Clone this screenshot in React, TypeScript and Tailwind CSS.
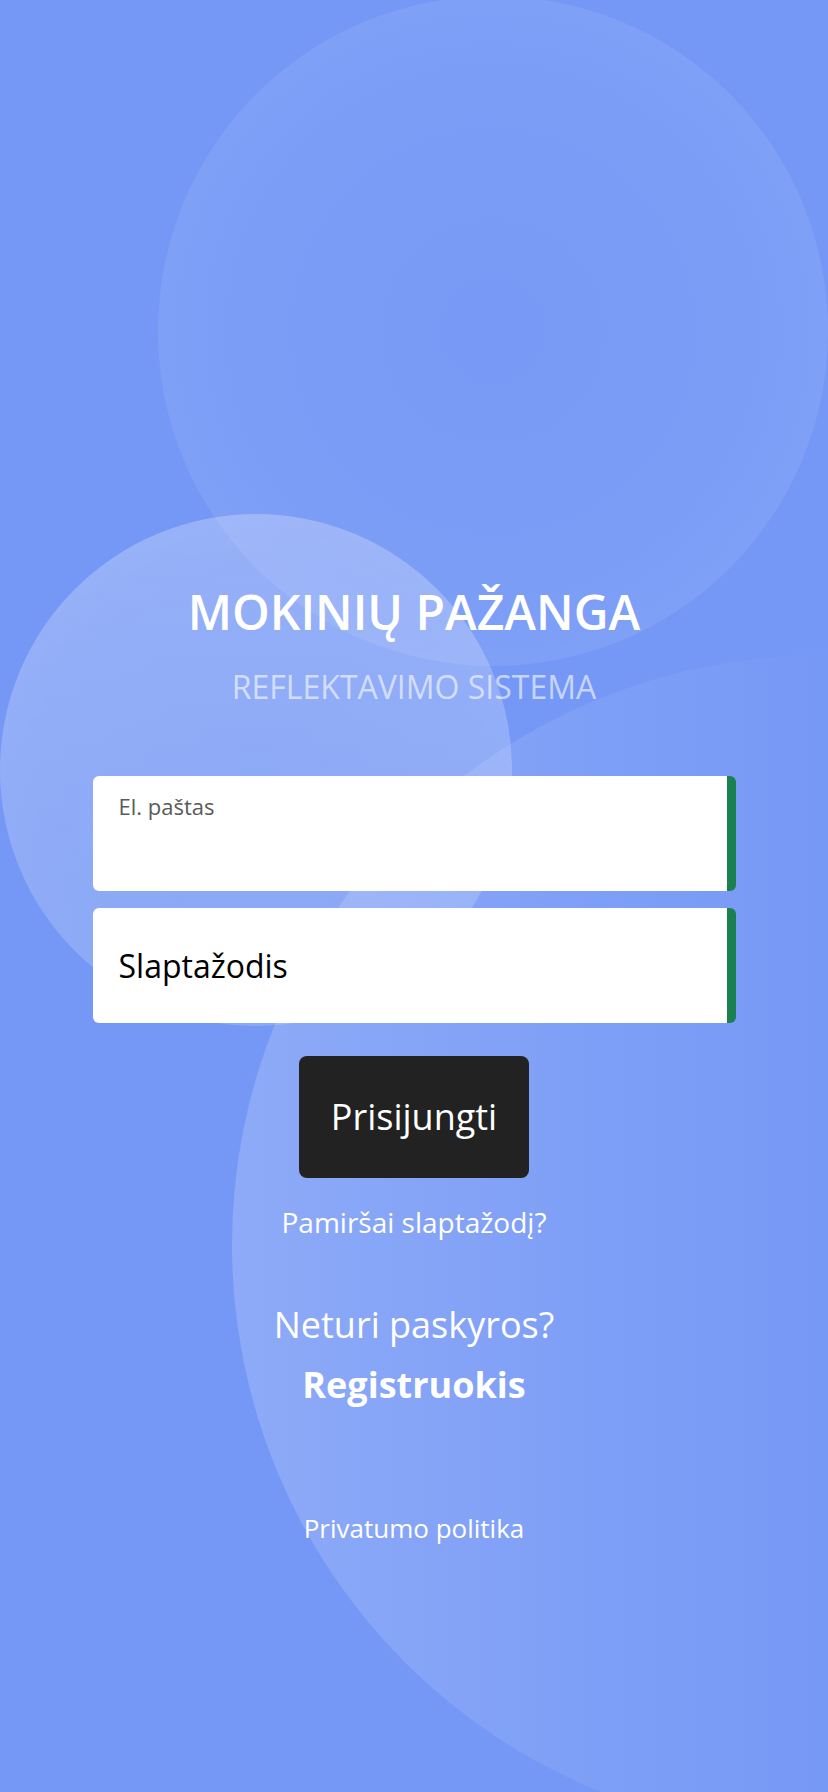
export default function App() {
  return (
    <div className="relative min-h-screen h-[1792px] w-full overflow-hidden bg-[#7598f6] font-['Open_Sans',sans-serif]">
      {/* decorative bubbles */}
      <div className="absolute left-[158px] top-[-4px] h-[670px] w-[670px] rounded-full bg-[radial-gradient(circle,rgba(255,255,255,0.02)_0%,rgba(255,255,255,0.05)_55%,rgba(255,255,255,0.13)_100%)]" />
      <div className="absolute left-[0px] top-[514px] h-[512px] w-[512px] rounded-full bg-[linear-gradient(180deg,rgba(255,255,255,0.14)_0%,rgba(255,255,255,0.04)_100%),radial-gradient(circle,rgba(255,255,255,0.1)_0%,rgba(255,255,255,0.12)_60%,rgba(255,255,255,0.18)_100%)]" />
      <div className="absolute left-[232px] top-[655px] h-[1180px] w-[1180px] rounded-full bg-[linear-gradient(90deg,rgba(255,255,255,0.18)_0%,rgba(255,255,255,0.07)_30%,rgba(255,255,255,0)_55%)]" />

      <div className="relative mx-auto flex w-[643px] flex-col items-center pt-[583px]">
        <h1 className="text-[48px] font-semibold leading-[58px] text-white">MOKINIŲ PAŽANGA</h1>
        <p className="mt-[26px] text-[32px] leading-[40px] text-white/60">REFLEKTAVIMO SISTEMA</p>

        <div className="mt-[69px] flex w-full flex-col gap-[17px]">
          <div className="h-[115px] w-full rounded-[6px] border-r-[9px] border-[#1b8050] bg-white pl-[26px] pt-[15px]">
            <span className="text-[22px] leading-[30px] text-[#5a5a5a]">El. paštas</span>
          </div>
          <div className="flex h-[115px] w-full items-center rounded-[6px] border-r-[9px] border-[#1b8050] bg-white pl-[26px]">
            <span className="text-[32px] leading-[40px] text-black">Slaptažodis</span>
          </div>
        </div>

        <button className="mt-[33px] flex h-[122px] w-[230px] items-center justify-center rounded-[8px] bg-[#222222] text-[36px] text-white">
          Prisijungti
        </button>

        <a className="mt-[26px] text-[28px] leading-[36px] text-white">Pamiršai slaptažodį?</a>

        <p className="mt-[61px] text-[36px] leading-[48px] text-white">Neturi paskyros?</p>
        <a className="mt-[12px] text-[36px] font-bold leading-[48px] text-white">Registruokis</a>

        <a className="mt-[101px] text-[26px] leading-[36px] text-white">Privatumo politika</a>
      </div>
    </div>
  );
}
